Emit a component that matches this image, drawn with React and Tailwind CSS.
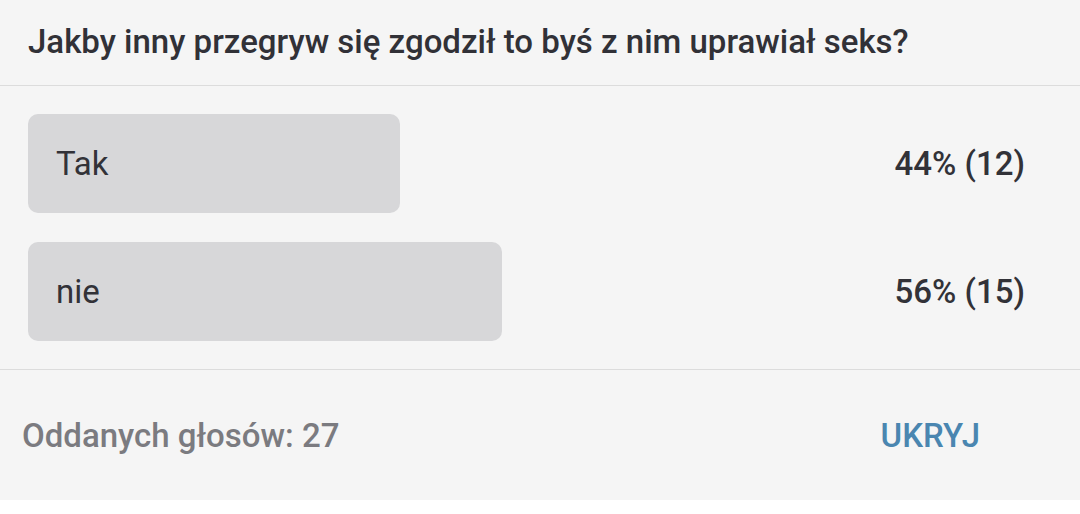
import React from "react";

const options = [
  { label: "Tak", pct: 44, votes: 12 },
  { label: "nie", pct: 56, votes: 15 },
];

export default function App() {
  return (
    <div className="w-[1080px] h-[514px] bg-white" style={{ fontFamily: "Roboto, 'Noto Sans', sans-serif" }}>
      <div className="bg-[#f5f5f5] h-[500px] flex flex-col">
        <div className="h-[86px] flex items-center pl-[28px] pb-[2px] border-b border-[#dcdcdc]">
          <h1 className="text-[33px] font-medium text-[#313137] leading-none">
            Jakby inny przegryw się zgodził to byś z nim uprawiał seks?
          </h1>
        </div>
        <div className="flex flex-col gap-[29px] pt-[28px] pb-[28px] border-b border-[#dcdcdc]">
          {options.map((o) => (
            <div key={o.label} className="flex items-center pl-[28px] pr-[55px]">
              <div className="w-[846px]">
                <div
                  className="h-[99px] rounded-[10px] bg-[#d7d7d9] flex items-center pl-[28px]"
                  style={{ width: `${o.pct}%` }}
                >
                  <span className="text-[33px] text-[#323238] leading-none whitespace-nowrap">{o.label}</span>
                </div>
              </div>
              <div className="ml-auto text-[33px] font-medium text-[#323238] leading-none whitespace-nowrap">
                {o.pct}% ({o.votes})
              </div>
            </div>
          ))}
        </div>
        <div className="flex-1 flex items-center justify-between pl-[22px] pr-[100px]">
          <span className="text-[33px] font-medium text-[#7b7b80] leading-none">Oddanych głosów: 27</span>
          <span className="text-[33px] font-medium text-[#4a86b0] leading-none">UKRYJ</span>
        </div>
      </div>
    </div>
  );
}
